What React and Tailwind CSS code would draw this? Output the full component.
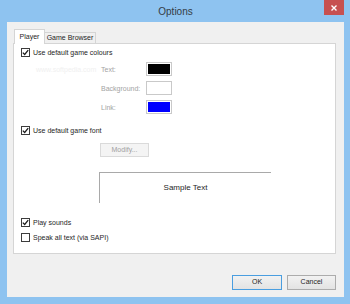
import React from 'react'

function Check({ checked }) {
  return (
    <span className="w-[9px] h-[9px] border border-[#3c3c3c] bg-white flex items-center justify-center shrink-0">
      {checked && (
        <svg width="7" height="7" viewBox="0 0 7 7">
          <path d="M0.8 3.6 L2.7 5.5 L6.2 1.2" fill="none" stroke="#1b1b1b" strokeWidth="1.3" />
        </svg>
      )}
    </span>
  )
}

function CheckRow({ checked, label, className }) {
  return (
    <div className={`flex items-center gap-[3px] ml-[7px] h-[9px] ${className}`}>
      <Check checked={checked} />
      <span className="text-[#1e1e1e] leading-none">{label}</span>
    </div>
  )
}

function ColourRow({ label, swatch, extra }) {
  return (
    <div className="flex items-center h-[14px]">
      <span className="w-[65px] ml-[22px] text-[#f0f0f0] leading-none">{extra}</span>
      <span className="w-[45px] text-[#a3a3a3] leading-none">{label}</span>
      <span className={`w-[26px] h-[14px] border border-[#c9c9c9] p-[1px]`}>
        <span className={`block w-full h-full ${swatch}`} />
      </span>
    </div>
  )
}

export default function App() {
  return (
    <div
      className="w-[350px] h-[304px] bg-[#8ec3f0] flex flex-col pl-[7px] pr-[6px] pb-[7px] text-[7px]"
      style={{ fontFamily: '"Liberation Sans", Arial, sans-serif' }}
    >
      {/* title bar */}
      <div className="h-[22px] relative flex items-center justify-center">
        <span className="text-[10px] text-[#333b44] pt-[1px]">Options</span>
        <div className="absolute right-0 top-0 w-[20px] h-[15px] bg-[#c75050] flex items-center justify-center">
          <svg width="6" height="6" viewBox="0 0 6 6">
            <path d="M0.5 0.5 L5.5 5.5 M5.5 0.5 L0.5 5.5" stroke="#fff" strokeWidth="1.4" />
          </svg>
        </div>
      </div>

      {/* client area */}
      <div className="flex-1 bg-[#f0f0f0] flex flex-col pt-[7px] pl-[6px] pr-[8px]">
        <div className="flex items-end h-[15px] ml-[1px] -mb-px relative z-10">
          <div className="w-[31px] h-[15px] bg-white border border-b-0 border-[#d5d5d5] flex items-center justify-center text-[#1e1e1e]">
            Player
          </div>
          <div className="w-[51px] h-[12px] bg-[#f0f0f0] border border-l-0 border-[#d5d5d5] flex items-center justify-center text-[#1e1e1e]">
            Game Browser
          </div>
        </div>

        <div className="h-[211px] bg-white border border-[#d5d5d5] flex flex-col">
          <CheckRow checked label="Use default game colours" className="mt-[4px]" />

          <div className="flex flex-col gap-[5px] mt-[5px]">
            <ColourRow label="Text:" swatch="bg-black" extra="www.softpedia.com" />
            <ColourRow label="Background:" swatch="bg-white" />
            <ColourRow label="Link:" swatch="bg-[#0000ff]" />
          </div>

          <CheckRow checked label="Use default game font" className="mt-[12px]" />

          <div className="ml-[86px] mt-[8px] w-[49px] h-[14px] bg-[#f4f4f4] border border-[#dadada] flex items-center justify-center text-[#a0a0a0]">
            Modify...
          </div>

          <div className="ml-[85px] mt-[15px] w-[172px] h-[31px] border-t border-l border-[#a9a9a9] flex items-center justify-center">
            <span className="text-[8px] text-[#1e1e1e]">Sample Text</span>
          </div>

          <CheckRow checked label="Play sounds" className="mt-[15px]" />
          <CheckRow label="Speak all text (via SAPI)" className="mt-[6px]" />
        </div>

        <div className="flex justify-end gap-[5px] mt-[21px]">
          <div className="w-[50px] h-[15px] border border-[#4a9ee0] bg-gradient-to-b from-[#f2f2f2] to-[#e3e3e3] flex items-center justify-center text-[#1e1e1e]">
            OK
          </div>
          <div className="w-[49px] h-[15px] border border-[#acacac] bg-gradient-to-b from-[#f2f2f2] to-[#e3e3e3] flex items-center justify-center text-[#1e1e1e]">
            Cancel
          </div>
        </div>
      </div>
    </div>
  )
}
